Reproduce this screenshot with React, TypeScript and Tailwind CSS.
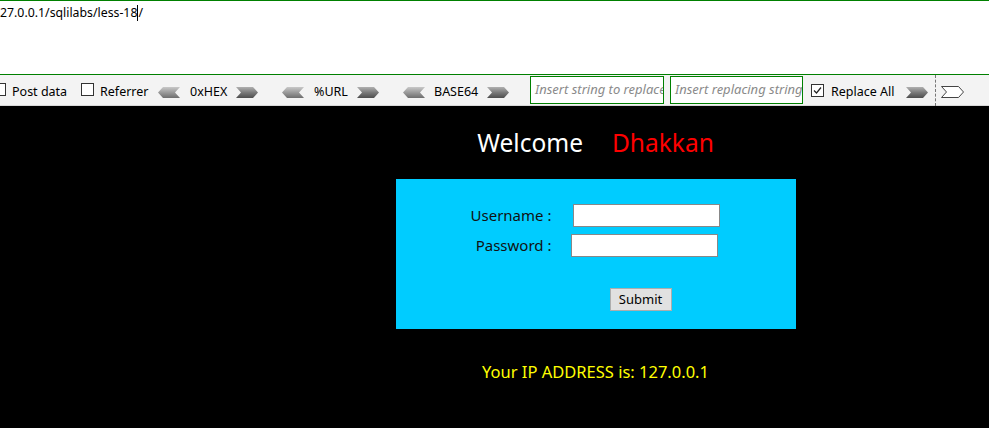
import React from "react";

const font = { fontFamily: '"Noto Sans", "Open Sans", sans-serif' };

function ArrowLeft() {
  return (
    <svg width="22" height="11" viewBox="0 0 22 11" className="block">
      <defs>
        <linearGradient id="gl" x1="0" y1="0" x2="0" y2="1">
          <stop offset="0" stopColor="#c8c8c8" />
          <stop offset="0.5" stopColor="#9a9a9a" />
          <stop offset="1" stopColor="#6e6e6e" />
        </linearGradient>
      </defs>
      <polygon points="0,5.5 5,0 22,0 17,5.5 22,11 5,11" fill="url(#gl)" />
    </svg>
  );
}

function ArrowRight() {
  return (
    <svg width="22" height="11" viewBox="0 0 22 11" className="block">
      <defs>
        <linearGradient id="gr" x1="0" y1="0" x2="0" y2="1">
          <stop offset="0" stopColor="#b0b0b0" />
          <stop offset="0.5" stopColor="#7a7a7a" />
          <stop offset="1" stopColor="#4e4e4e" />
        </linearGradient>
      </defs>
      <polygon points="0,0 17,0 22,5.5 17,11 0,11 5,5.5" fill="url(#gr)" />
    </svg>
  );
}

function ArrowOutline() {
  return (
    <svg width="23" height="12" viewBox="0 0 23 12" className="block">
      <polygon points="0.5,0.5 17.5,0.5 22.5,6 17.5,11.5 0.5,11.5 5.5,6" fill="#ffffff" stroke="#444" strokeWidth="1" />
    </svg>
  );
}

function Box({ checked }: { checked?: boolean }) {
  return (
    <span className="inline-flex w-[13px] h-[13px] border border-[#333] bg-white items-center justify-center shrink-0">
      {checked && (
        <svg width="11" height="11" viewBox="0 0 11 11">
          <polyline points="2,5.5 4.5,8 9,2.5" fill="none" stroke="#222" strokeWidth="1.2" />
        </svg>
      )}
    </span>
  );
}

export default function App() {
  return (
    <div className="w-[989px] h-[428px] overflow-hidden bg-black flex flex-col" style={font}>
      <div className="h-[75px] bg-white border-t border-b border-[#008000] shrink-0">
        <div className="pt-[3px] text-[12.3px] text-black leading-[18px] whitespace-nowrap">
          27.0.0.1/sqlilabs/less-18<span className="inline-block w-px h-[16px] bg-black align-middle -mt-[2px]" />/
        </div>
      </div>
      <div className="h-[31px] pt-[4px] bg-[#f3f3f3] border-b border-[#d8d8d8] shrink-0 flex items-center text-[12.5px] text-black whitespace-nowrap">
        <div className="ml-[-7px]"><Box /></div>
        <span className="ml-[6px] w-[54px]">Post data</span>
        <div className="ml-[15px]"><Box /></div>
        <span className="ml-[6px] w-[46px]">Referrer</span>
        <div className="ml-[12px]"><ArrowLeft /></div>
        <span className="ml-[10px] w-[37px]">0xHEX</span>
        <div className="ml-[9px]"><ArrowRight /></div>
        <div className="ml-[24px]"><ArrowLeft /></div>
        <span className="ml-[10px] w-[33px]">%URL</span>
        <div className="ml-[10px]"><ArrowRight /></div>
        <div className="ml-[24px]"><ArrowLeft /></div>
        <span className="ml-[9px] w-[44px]">BASE64</span>
        <div className="ml-[9px]"><ArrowRight /></div>
        <div className="ml-[21px] w-[134px] h-[28px] -mt-[4px] border border-[#008000] bg-white flex items-center overflow-hidden pl-[4px] shrink-0">
          <span className="italic text-[#8a8a8a] text-[13px]">Insert string to replace</span>
        </div>
        <div className="ml-[6px] w-[133px] h-[28px] -mt-[4px] border border-[#008000] bg-white flex items-center overflow-hidden pl-[4px] shrink-0">
          <span className="italic text-[#8a8a8a] text-[13px]">Insert replacing string</span>
        </div>
        <div className="ml-[8px]"><Box checked /></div>
        <span className="ml-[7px] w-[63px]">Replace All</span>
        <div className="ml-[12px]"><ArrowRight /></div>
        <div className="ml-[7px] h-[31px] -mt-[4px] border-l border-dashed border-[#777]" />
        <div className="ml-[5px]"><ArrowOutline /></div>
      </div>
      <div className="flex-1 pl-[202px] flex flex-col items-center">
        <div className="mt-[19px] flex items-baseline text-[24.5px] leading-[36px]">
          <span className="text-white">Welcome</span>
          <span className="ml-[29px] text-[#ff0000]">Dhakkan</span>
        </div>
        <div className="mt-[18px] w-[400px] h-[150px] bg-[#00ccff] flex flex-col items-center">
          <div className="mt-[25px] grid grid-cols-[auto_auto] gap-y-[7px] items-center text-[15px] text-[#111]">
            <span className="pr-[22px] text-right">Username :</span>
            <input className="w-[147px] h-[23px] bg-white border border-[#888] outline-none" />
            <span className="pr-[22px] text-right">Password :</span>
            <input type="password" className="w-[147px] h-[23px] bg-white border border-[#888] outline-none -ml-[2px]" />
          </div>
          <button className="mt-[31px] ml-[90px] w-[62px] h-[23px] bg-[#e1e1e1] border border-[#adadad] text-[13px] text-black leading-none">
            Submit
          </button>
        </div>
        <div className="mt-[31px] text-[16.5px] text-[#ffff00]">Your IP ADDRESS is: 127.0.0.1</div>
      </div>
    </div>
  );
}
